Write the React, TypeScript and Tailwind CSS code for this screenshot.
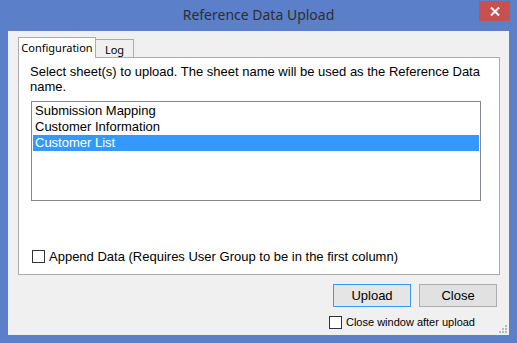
import React, { useState } from 'react';

const sheets = ['Submission Mapping', 'Customer Information', 'Customer List'];

const Check = ({ checked, onChange }: { checked: boolean; onChange: () => void }) => (
  <button
    onClick={onChange}
    className="w-[13px] h-[13px] border border-[#333333] bg-white flex items-center justify-center shrink-0"
  >
    {checked && (
      <svg width="9" height="9" viewBox="0 0 9 9">
        <path d="M1 4.5 L3.5 7 L8 1.5" stroke="#222" strokeWidth="1.5" fill="none" />
      </svg>
    )}
  </button>
);

const App = () => {
  const [selected, setSelected] = useState(2);
  const [append, setAppend] = useState(false);
  const [closeAfter, setCloseAfter] = useState(false);
  const [tab, setTab] = useState('config');

  return (
    <div
      className="w-[517px] h-[343px] bg-[#5b80c9] flex flex-col text-[#000000]"
      style={{ fontFamily: '"Liberation Sans", Arial, sans-serif' }}
    >
      {/* Title bar */}
      <div className="relative h-[31px] flex items-center justify-center shrink-0">
        <span
          className="text-[14px] text-[#2e2e2e] leading-none -mt-[1px]"
          style={{ fontFamily: '"Noto Sans", "Open Sans", sans-serif' }}
        >
          Reference Data Upload
        </span>
        <button className="absolute right-[7px] top-[1px] w-[31px] h-[20px] bg-[#c75050] flex items-center justify-center">
          <svg width="10" height="9" viewBox="0 0 10 9">
            <path d="M1 0.5 L9 8.5 M9 0.5 L1 8.5" stroke="#ffffff" strokeWidth="2" />
          </svg>
        </button>
      </div>

      {/* Client area */}
      <div className="relative flex-1 mx-[8px] mb-[8px] bg-[#f0f0f0] flex flex-col pl-[10px] pr-[9px] pt-[6px]">
        {/* Tabs */}
        <div
          className="flex items-end h-[20px] text-[11px] relative z-10"
          style={{ fontFamily: '"Noto Sans", "Open Sans", sans-serif' }}
        >
          <button
            onClick={() => setTab('config')}
            className={`w-[78px] border border-[#acacac] border-b-0 flex items-center justify-center leading-none ${
              tab === 'config' ? 'h-[21px] bg-white -mb-[1px] pb-[2px]' : 'h-[18px] bg-[#f0f0f0]'
            }`}
          >
            Configuration
          </button>
          <button
            onClick={() => setTab('log')}
            className={`w-[38px] border border-[#acacac] border-b-0 border-l-0 flex items-center justify-center leading-none ${
              tab === 'log' ? 'h-[21px] bg-white -mb-[1px]' : 'h-[18px] bg-[#f0f0f0] pt-[1px]'
            }`}
          >
            Log
          </button>
        </div>

        {/* Tab panel */}
        <div className="h-[218px] bg-white border border-[#acacac] flex flex-col pl-[11px] pt-[6px]">
          {tab === 'config' && (
            <>
              <p className="text-[13px] leading-[15px] pr-[6px]">
                Select sheet(s) to upload. The sheet name will be used as the Reference Data name.
              </p>
              <div className="mt-[7px] ml-[1px] w-[450px] h-[100px] border border-[#828790] p-[1px] flex flex-col">
                {sheets.map((s, i) => (
                  <div
                    key={s}
                    onClick={() => setSelected(i)}
                    className={`h-[16px] pl-[2px] text-[13px] leading-[16px] cursor-default ${
                      selected === i ? 'bg-[#3399ff] text-white' : ''
                    }`}
                  >
                    {s}
                  </div>
                ))}
              </div>
              <div className="mt-[49px] ml-[2px] flex items-center gap-[4px]">
                <Check checked={append} onChange={() => setAppend(!append)} />
                <span className="text-[13px] leading-none">
                  Append Data (Requires User Group to be in the first column)
                </span>
              </div>
            </>
          )}
        </div>

        {/* Buttons */}
        <div className="flex justify-end gap-[8px] mt-[9px] pr-[3px]">
          <button className="w-[78px] h-[23px] border border-[#3399ff] bg-[#e5e5e5] text-[13px] leading-none">
            Upload
          </button>
          <button className="w-[78px] h-[23px] border border-[#adadad] bg-[#e1e1e1] text-[13px] leading-none">
            Close
          </button>
        </div>

        <div className="flex justify-end mt-[9px] pr-[25px]">
          <div className="flex items-center gap-[4px]">
            <Check checked={closeAfter} onChange={() => setCloseAfter(!closeAfter)} />
            <span className="text-[11px] leading-none">Close window after upload</span>
          </div>
        </div>

        {/* Resize grip */}
        <svg className="absolute right-[2px] bottom-[2px]" width="10" height="10" viewBox="0 0 10 10">
          {[
            [8, 0], [8, 3], [5, 3], [8, 6], [5, 6], [2, 6],
          ].map(([x, y]) => (
            <rect key={`${x}-${y}`} x={x} y={y + 2} width="2" height="2" fill="#b8b8b8" />
          ))}
        </svg>
      </div>
    </div>
  );
};

export default App;
